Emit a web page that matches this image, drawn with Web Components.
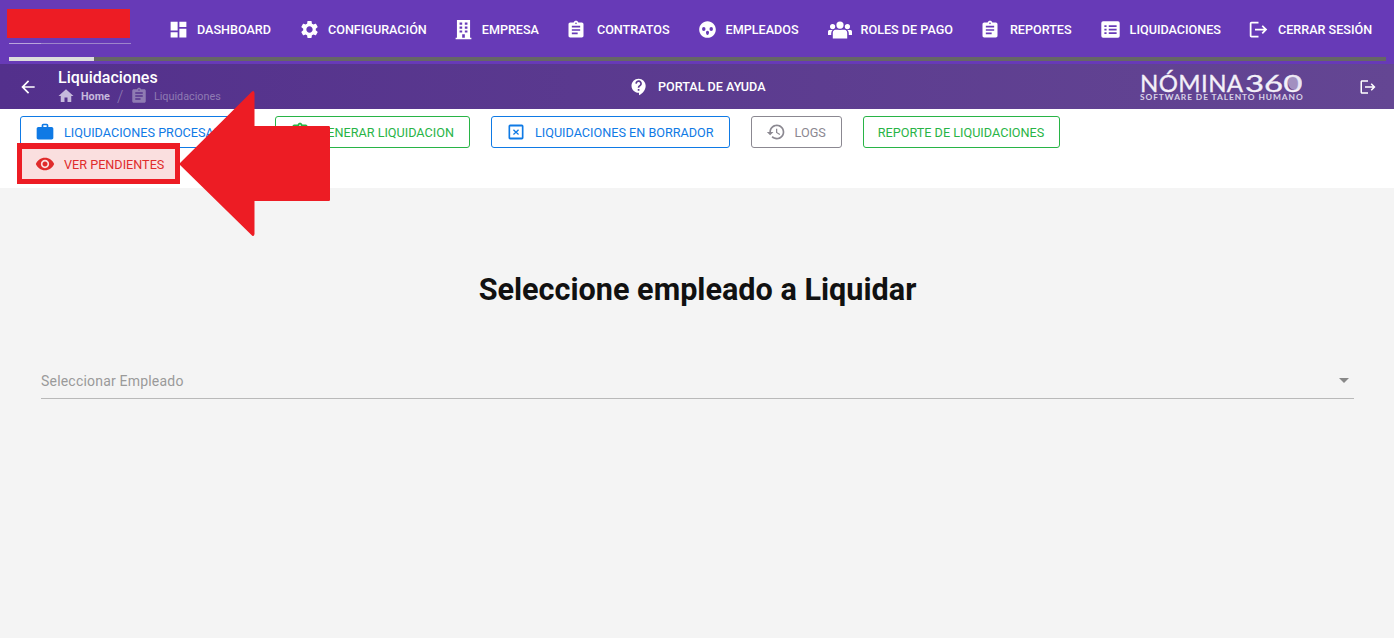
<!DOCTYPE html>
<html lang="es">
<head>
<meta charset="utf-8">
<title>Liquidaciones</title>
<style>
  html, body { margin: 0; height: 100%; }
  body { background: #f4f4f4; font-family: Roboto, "Liberation Sans", sans-serif; overflow: hidden; }
</style>
</head>
<body>
<app-shell></app-shell>

<script>
const ICONS = {
  dashboard: 'M3 13h8V3H3v10zm0 8h8v-6H3v6zm10 0h8V11h-8v10zm0-18v6h8V3h-8z',
  settings: 'M19.14 12.94c.04-.3.06-.61.06-.94 0-.32-.02-.64-.07-.94l2.03-1.58c.18-.14.23-.41.12-.61l-1.92-3.32c-.12-.22-.37-.29-.59-.22l-2.39.96c-.5-.38-1.03-.7-1.62-.94l-.36-2.54c-.04-.24-.24-.41-.48-.41h-3.84c-.24 0-.43.17-.47.41l-.36 2.54c-.59.24-1.13.57-1.62.94l-2.39-.96c-.22-.08-.47 0-.59.22L2.74 8.87c-.12.21-.08.47.12.61l2.03 1.58c-.05.3-.09.63-.09.94s.02.64.07.94l-2.03 1.58c-.18.14-.23.41-.12.61l1.92 3.32c.12.22.37.29.59.22l2.39-.96c.5.38 1.03.7 1.62.94l.36 2.54c.05.24.24.41.48.41h3.84c.24 0 .44-.17.47-.41l.36-2.54c.59-.24 1.13-.56 1.62-.94l2.39.96c.22.08.47 0 .59-.22l1.92-3.32c.12-.22.07-.47-.12-.61l-2.01-1.58zM12 15.6c-1.98 0-3.6-1.62-3.6-3.6s1.62-3.6 3.6-3.6 3.6 1.62 3.6 3.6-1.62 3.6-3.6 3.6z',
  building: 'M4.5 1h15v20.500h1.500V23H3v-1.500h1.500V1zM7.500 4v2.500h3V4h-3zm6 0v2.500h3V4h-3zm-6 4.500V11h3V8.500h-3zm6 0V11h3V8.500h-3zM7.500 13v2.500h3V13h-3zm6 0v2.500h3V13h-3zm-3 4.500v4h3v-4h-3z',
  assignment: 'M19 3h-4.18C14.4 1.84 13.3 1 12 1c-1.3 0-2.4.84-2.82 2H5c-1.1 0-2 .9-2 2v14c0 1.1.9 2 2 2h14c1.1 0 2-.9 2-2V5c0-1.1-.9-2-2-2zm-7 0c.55 0 1 .45 1 1s-.45 1-1 1-1-.45-1-1 .45-1 1-1zm2 14H7v-2h7v2zm3-4H7v-2h10v2zm0-4H7V7h10v2z',
  people: 'M12 1.500C6.200 1.500 1.500 6.200 1.500 12S6.200 22.500 12 22.500 22.500 17.800 22.500 12 17.800 1.500 12 1.500zM7.300 8.800a2.200 2.500 0 1 1 0 5 2.200 2.500 0 0 1 0-5zm9.400 0a2.200 2.500 0 1 1 0 5 2.200 2.500 0 0 1 0-5zM12 13.500c1.100 0 1.900 1 1.900 2.300S13.100 19 12 19s-1.900-1.900-1.900-3.200.8-2.300 1.900-2.300z',
  users: 'M12 3.500a3.600 3.600 0 1 1 0 7.200 3.600 3.600 0 0 1 0-7.200zM4.600 6a2.600 2.600 0 1 1 0 5.200 2.600 2.600 0 0 1 0-5.200zm14.800 0a2.600 2.600 0 1 1 0 5.200 2.600 2.600 0 0 1 0-5.200zM7.400 11.800c1.200 0 3 .1 4.600.1s3.400-.1 4.600-.1c1.500 0 2.600 1.400 2.600 3V20.500H4.800v-5.700c0-1.600 1.100-3 2.600-3zM0 13.500c0-.9.7-1.500 1.600-1.500h3a4.600 4.600 0 0 0-1.400 3.200V17H0v-3.500zm24 0V17h-3.200v-1.800A4.600 4.600 0 0 0 19.400 12h3c.9 0 1.600.6 1.600 1.500z',
  listalt: 'M3.500 2.500h17a2 2 0 0 1 2 2v15a2 2 0 0 1-2 2h-17a2 2 0 0 1-2-2v-15a2 2 0 0 1 2-2zM5 7v2h2.500V7H5zm5 0v2h9V7h-9zm-5 4v2h2.500v-2H5zm5 0v2h9v-2h-9zm-5 4v2h2.500v-2H5zm5 0v2h9v-2h-9z',
  logout: 'M17 7l-1.41 1.41L18.17 11H8v2h10.170l-2.580 2.580L17 17l5-5zM4 5h8V3H4c-1.100 0-2 .9-2 2v14c0 1.100.9 2 2 2h8v-2H4V5z',
  help: 'M11.5 2C6.81 2 3 5.81 3 10.5S6.81 19 11.5 19h.5v3c4.86-2.34 8-7 8-11.5C20 5.81 16.19 2 11.5 2zm1 14.5h-2v-2h2v2zm.4-4.780c-.01.01-.02.03-.03.05-.05.08-.1.16-.14.24-.02.03-.03.07-.04.11-.03.07-.06.14-.08.21-.07.21-.1.43-.1.68H10.500c0-.51.08-.94.2-1.300 0-.01 0-.02.01-.03.01-.04.04-.06.05-.1.06-.16.13-.3.22-.44.03-.05.07-.1.1-.15.03-.04.05-.09.08-.12l.01.01c.84-1.100 2.210-1.440 2.320-2.680.09-.98-.61-1.930-1.570-2.130-1.040-.22-1.980.39-2.300 1.280-.14.36-.47.65-.88.65h-.2c-.6 0-1.040-.59-.87-1.170.55-1.820 2.370-3.090 4.430-2.790 1.690.25 3.040 1.640 3.330 3.330.44 2.440-1.630 3.030-2.530 4.350z',
  back: 'M20 11H7.830l5.590-5.590L12 4l-8 8 8 8 1.410-1.410L7.830 13H20v-2z',
  home: 'M10 20v-6h4v6h5v-8h3L12 3 2 12h3v8z',
  work: 'M20 6h-4V4c0-1.110-.89-2-2-2h-4c-1.110 0-2 .89-2 2v2H4c-1.110 0-1.990.89-1.990 2L2 19c0 1.110.89 2 2 2h16c1.110 0 2-.89 2-2V8c0-1.110-.89-2-2-2zm-6 0h-4V4h4v2z',
  eye: 'M12 4.500C7 4.500 2.730 7.610 1 12c1.730 4.390 6 7.500 11 7.500s9.270-3.110 11-7.500c-1.730-4.390-6-7.500-11-7.500zM12 17c-2.760 0-5-2.240-5-5s2.240-5 5-5 5 2.240 5 5-2.240 5-5 5zm0-8c-1.660 0-3 1.340-3 3s1.340 3 3 3 3-1.340 3-3-1.340-3-3-3z',
  draft: 'M5 3h14a2 2 0 0 1 2 2v14a2 2 0 0 1-2 2H5a2 2 0 0 1-2-2V5a2 2 0 0 1 2-2zm0 2.500v13h14v-13H5zM9.500 8.800l2.500 2.300 2.500-2.300 1.100 1.100-2.400 2.300 2.400 2.300-1.100 1.100-2.500-2.300-2.500 2.300-1.100-1.100 2.400-2.300-2.400-2.300z',
  history: 'M13 3c-4.970 0-9 4.030-9 9H1l3.890 3.890.07.14L9 12H6c0-3.870 3.130-7 7-7s7 3.130 7 7-3.130 7-7 7c-1.930 0-3.680-.79-4.940-2.060l-1.420 1.420C8.270 19.990 10.510 21 13 21c4.970 0 9-4.030 9-9s-4.030-9-9-9zm-1 5v5l4.280 2.540.72-1.210-3.500-2.080V8H12z'
};

const svgIcon = (name, size) =>
  `<svg width="${size}" height="${size}" viewBox="0 0 24 24" fill="currentColor" fill-rule="evenodd"><path d="${ICONS[name]}"/></svg>`;

// top menu link, --lead is the distance from icon start to label start
class NavItem extends HTMLElement {
  connectedCallback() {
    const size = this.getAttribute('size') || 21;
    this.attachShadow({ mode: 'open' }).innerHTML = `
      <style>
        :host { display: flex; align-items: center; color: #fff; font-size: 12.6px; font-weight: 500; white-space: nowrap; }
        .ic { display: flex; align-items: center; justify-content: center; width: var(--lead, 27px); }
        .ic svg { display: block; margin-right: auto; margin-left: var(--nudge, -2.5px); }
      </style>
      <span class="ic">${svgIcon(this.getAttribute('icon'), size)}</span><slot></slot>`;
  }
}
customElements.define('nav-item', NavItem);

class TopNav extends HTMLElement {
  connectedCallback() {
    this.attachShadow({ mode: 'open' }).innerHTML = `
      <style>
        :host { display: block; height: 64px; background: #673ab7; box-sizing: border-box; padding-top: 9px; }
        .main { display: flex; height: 48px; }
        .brand { width: 170px; flex: none; }
        .logo { width: 123px; height: 29px; margin-left: 7px; background: #ed1c24; }
        .rule { width: 122px; height: 1px; margin: 5px 0 0 9px; background: linear-gradient(90deg, #b9a5dc 0 26%, #9d85cb 26%); }
        nav { display: flex; align-items: center; gap: 30px; height: 41px; }
        .track { height: 4px; margin: 0 8px 0 9px; background: #666; }
        .bar { width: 85px; height: 100%; background: #ddd; }
      </style>
      <div class="main">
        <div class="brand"><div class="logo"></div><div class="rule"></div></div>
        <nav><slot></slot></nav>
      </div>
      <div class="track"><div class="bar"></div></div>`;
    this.innerHTML = `
      <nav-item icon="dashboard">DASHBOARD</nav-item>
      <nav-item icon="settings">CONFIGURACIÓN</nav-item>
      <nav-item icon="building" style="--lead:25px;--nudge:-3.500px">EMPRESA</nav-item>
      <nav-item icon="assignment" size="20" style="--lead:28px">CONTRATOS</nav-item>
      <nav-item icon="people" size="19" style="--lead:26px;--nudge:-2px">EMPLEADOS</nav-item>
      <nav-item icon="users" size="24" style="--lead:32px;--nudge:-1px">ROLES DE PAGO</nav-item>
      <nav-item icon="assignment" size="20">REPORTES</nav-item>
      <nav-item icon="listalt" style="--lead:28px;--nudge:-2px">LIQUIDACIONES</nav-item>
      <nav-item icon="logout">CERRAR SESIÓN</nav-item>`;
  }
}
customElements.define('top-nav', TopNav);

class SubBar extends HTMLElement {
  connectedCallback() {
    this.attachShadow({ mode: 'open' }).innerHTML = `
      <style>
        :host { display: flex; align-items: center; height: 45px; color: #fff; background: linear-gradient(90deg, #53308c, #644693); }
        .back { display: flex; margin-left: 18px; width: 39px; }
        .crumbs { width: 360px; flex: none; margin-top: -2px; }
        h1 { margin: 0; padding-left: 1px; font-size: 16px; line-height: 20px; font-weight: 500; }
        .trail { display: flex; align-items: center; height: 15px; margin-top: 1px; font-size: 10.8px; color: #8f7bb3; }
        .trail svg { display: block; }
        .home { color: #c6b9dc; font-weight: 700; margin: 0 7px 0 6px; }
        .sep { width: 13px; font-size: 16px; font-weight: 300; }
        .leaf { margin-left: 6px; }
        .help { display: flex; align-items: center; gap: 9px; margin-left: 212px; font-size: 12.6px; font-weight: 500; }
        .brand { position: relative; margin-left: auto; width: 163px; margin-right: 56px; font-family: Lato, sans-serif; line-height: 1; }
        .name { display: flex; height: 21px; line-height: 21px; font-size: 24px; white-space: nowrap; color: #f3f0f8; -webkit-text-stroke: .3px #f3f0f8; }
        .nom { width: 105px; letter-spacing: .4px; }
        .num { display: inline-block; transform: scaleX(1.37); transform-origin: left center; }
        .globe { position: absolute; left: 148px; top: 3px; width: 14px; height: 15px; border-radius: 50%; background: rgba(226, 220, 238, .5); }
        .tag { font-size: 8.4px; font-weight: 700; letter-spacing: .92px; white-space: nowrap; color: #d9d2e6; height: 9px; line-height: 9px; }
        .out { display: flex; margin-right: 17px; }
      </style>
      <span class="back">${svgIcon('back', 20)}</span>
      <div class="crumbs">
        <h1>Liquidaciones</h1>
        <div class="trail">
          <span style="color:#c6b9dc">${svgIcon('home', 18)}</span>
          <span class="home">Home</span><span class="sep">/</span>
          ${svgIcon('assignment', 18)}<span class="leaf">Liquidaciones</span>
        </div>
      </div>
      <div class="help">${svgIcon('help', 20)}<span>PORTAL DE AYUDA</span></div>
      <div class="brand">
        <div class="name"><span class="nom">NÓMINA</span><span class="num">360</span></div>
        <div class="tag">SOFTWARE DE TALENTO HUMANO</div>
        <span class="globe"></span>
      </div>
      <span class="out">${svgIcon('logout', 18)}</span>`;
  }
}
customElements.define('sub-bar', SubBar);

class ToolButton extends HTMLElement {
  connectedCallback() {
    const icon = this.getAttribute('icon');
    this.attachShadow({ mode: 'open' }).innerHTML = `
      <style>
        :host { display: inline-flex; align-items: center; box-sizing: border-box; height: 32px; border: 1px solid currentColor; border-radius: 3px;
                padding: 0 15px 0 14px; gap: 9px; font-size: 12.65px; font-weight: 400; white-space: nowrap; background: #fff; }
        :host([tone=blue]) { color: #0f7ae5; }
        :host([tone=green]) { color: #28b446; }
        :host([tone=grey]) { color: #8b8891; }
        :host([tone=red]) { color: #e02b2b; background: #fadfdf; border-color: #fadfdf; }
        svg { display: block; }
      </style>
      ${icon ? svgIcon(icon, 20) : ''}<slot></slot>`;
  }
}
customElements.define('tool-button', ToolButton);

class ActionBar extends HTMLElement {
  connectedCallback() {
    this.attachShadow({ mode: 'open' }).innerHTML = `
      <style>
        :host { display: block; height: 79px; box-sizing: border-box; padding: 7px 20px 0; background: #fff; }
        .row { display: flex; gap: 21px; height: 32px; }
      </style>
      <div class="row"><slot name="row"></slot></div>
      <div class="row"><slot name="below"></slot></div>`;
    this.innerHTML = `
      <tool-button slot="row" tone="blue" icon="work">LIQUIDACIONES PROCESADAS</tool-button>
      <tool-button slot="row" tone="green" icon="assignment">GENERAR LIQUIDACION</tool-button>
      <tool-button slot="row" tone="blue" icon="draft">LIQUIDACIONES EN BORRADOR</tool-button>
      <tool-button slot="row" tone="grey" icon="history">LOGS</tool-button>
      <tool-button slot="row" tone="green">REPORTE DE LIQUIDACIONES</tool-button>
      <tool-button slot="below" tone="red" icon="eye">VER PENDIENTES</tool-button>`;
  }
}
customElements.define('action-bar', ActionBar);

class EmployeePicker extends HTMLElement {
  connectedCallback() {
    this.attachShadow({ mode: 'open' }).innerHTML = `
      <style>
        :host { display: block; padding: 0 40px 0 41px; }
        h2 { margin: 0; padding-top: 82px; height: 40px; line-height: 40px; text-align: center; font-size: 30.6px; font-weight: 700; color: #111; }
        .field { display: flex; align-items: center; justify-content: space-between; box-sizing: border-box; height: 39px; margin-top: 50px; padding-top: 3px; border-bottom: 1px solid #b9b9b9; font-size: 14px; color: #9a9a9a; letter-spacing: .2px; }
        .caret { width: 0; height: 0; margin-right: 5px; border: 5px solid transparent; border-top-color: #888; border-bottom: 0; }
      </style>
      <h2>Seleccione empleado a Liquidar</h2>
      <div class="field"><span>Seleccionar Empleado</span><span class="caret"></span></div>`;
  }
}
customElements.define('employee-picker', EmployeePicker);

// red annotation drawn over the page: frame around the button plus big arrow
class AnnotationArrow extends HTMLElement {
  connectedCallback() {
    this.attachShadow({ mode: 'open' }).innerHTML = `
      <style>
        :host { position: absolute; left: 0; top: 0; width: 340px; height: 240px; pointer-events: none; }
        .frame { position: absolute; left: 17px; top: 143px; width: 163px; height: 41px; box-sizing: border-box; border: solid #ed1c24; border-width: 6px 5px 5px; }
        svg { position: absolute; left: 0; top: 0; }
      </style>
      <div class="frame"></div>
      <svg width="340" height="240"><path d="M179 164 L252 91.500 Q254 90 254.500 93 V126 H329 Q330 126 330 127.500 V199.500 Q330 201 329 201 H254.500 V234 Q254 237 252 235.500 Z" fill="#ed1c24"/></svg>`;
  }
}
customElements.define('annotation-arrow', AnnotationArrow);

class AppShell extends HTMLElement {
  connectedCallback() {
    this.attachShadow({ mode: 'open' }).innerHTML = `
      <style>
        :host { display: block; position: relative; width: 1394px; height: 638px; background: #f4f4f4; overflow: hidden; }
      </style>
      <top-nav></top-nav>
      <sub-bar></sub-bar>
      <action-bar></action-bar>
      <employee-picker></employee-picker>
      <annotation-arrow></annotation-arrow>`;
  }
}
customElements.define('app-shell', AppShell);
</script>
</body>
</html>
